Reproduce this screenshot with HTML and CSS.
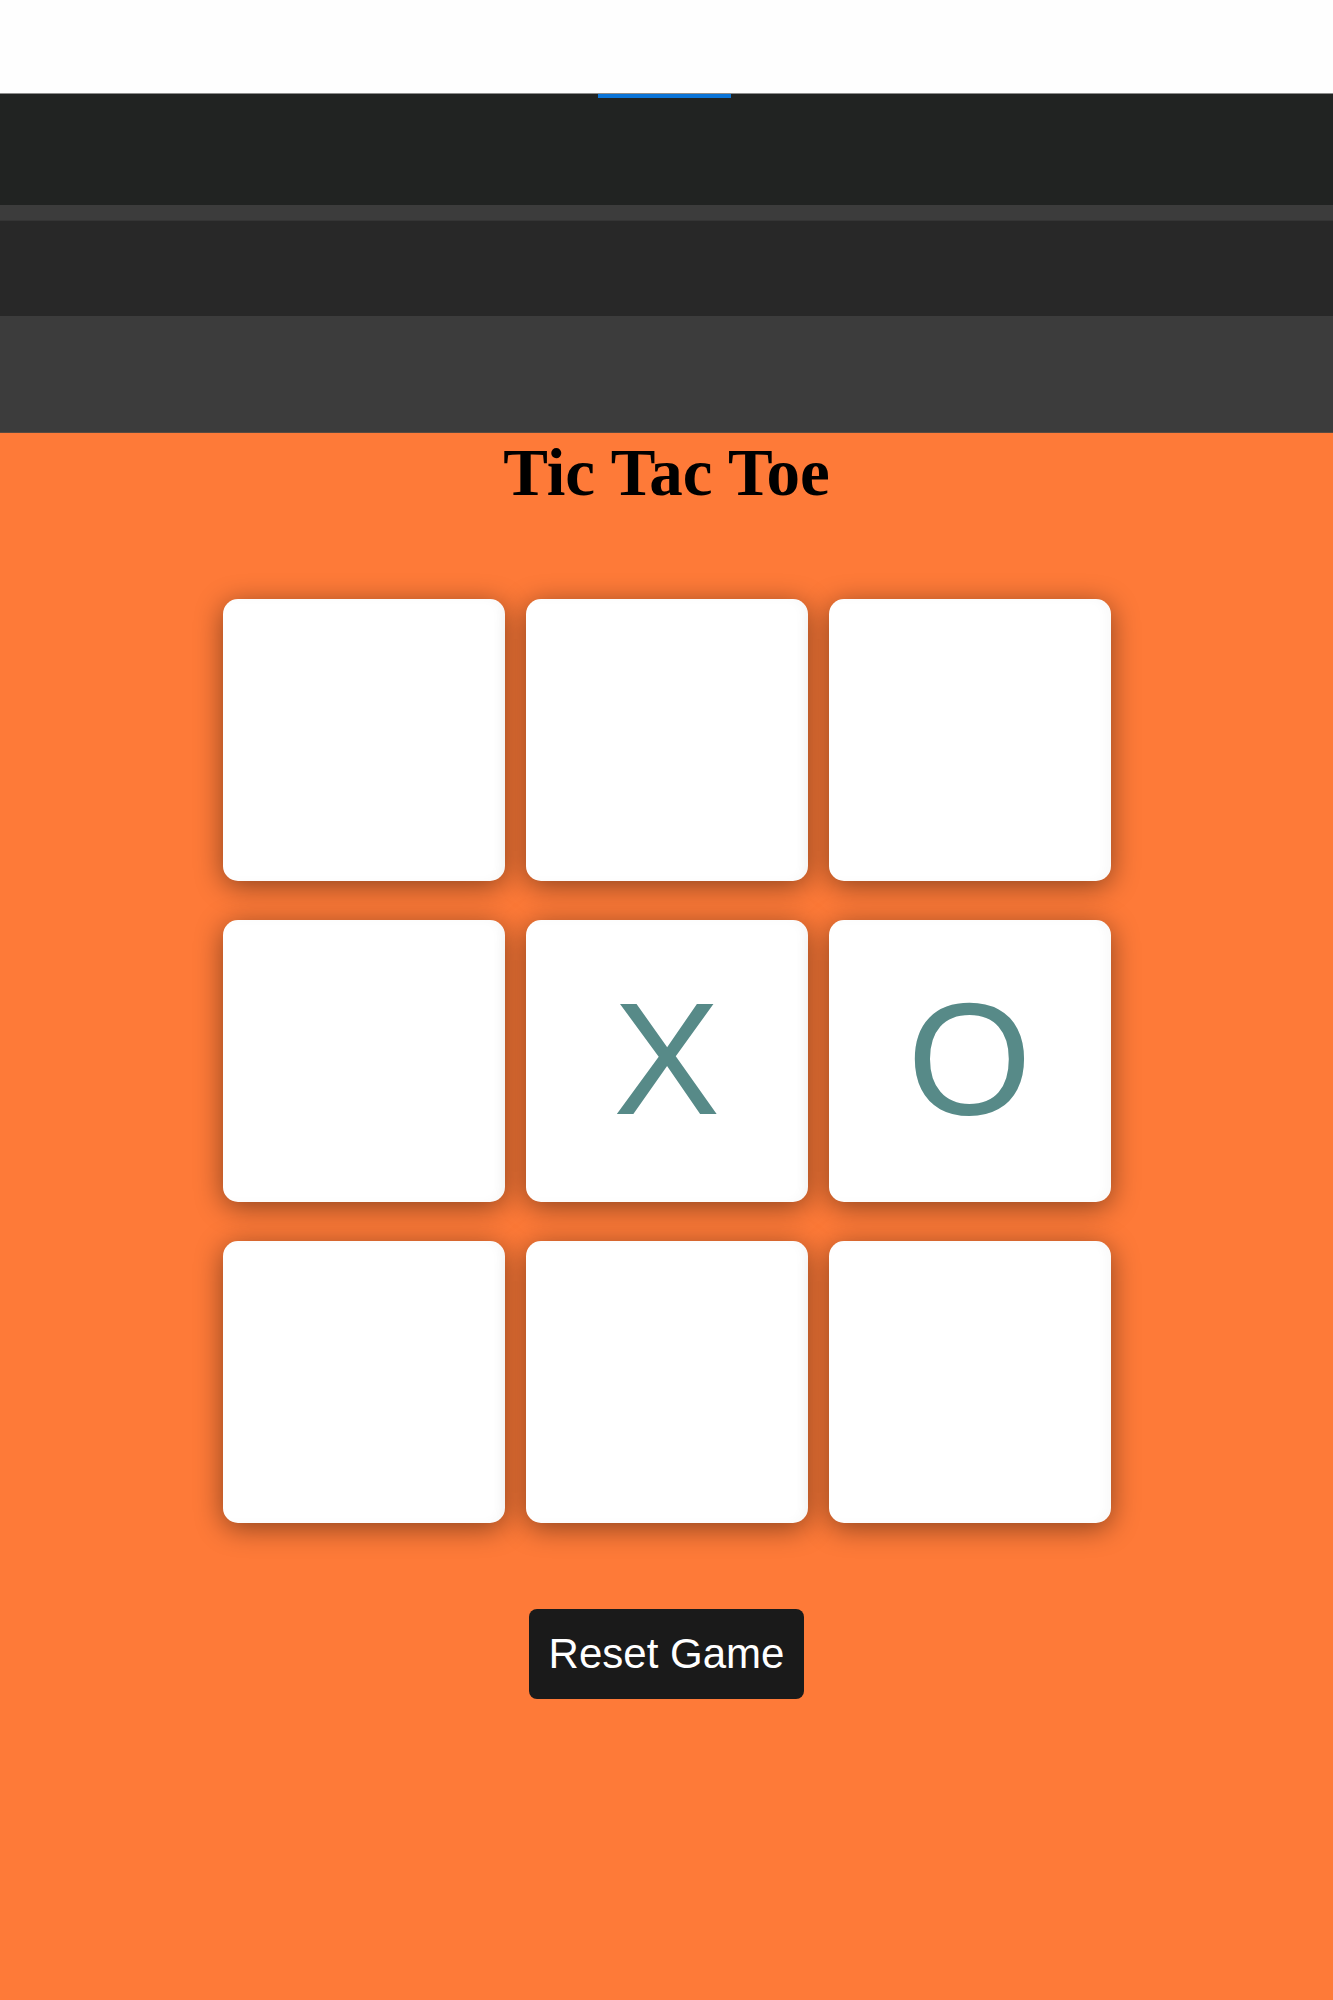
FILE: index.html
```html
<!DOCTYPE html>
<html lang="en">
<head>
<meta charset="utf-8">
<title>Tic Tac Toe</title>
<link rel="stylesheet" href="styles.css">
</head>
<body>
  <div class="chrome">
    <div class="chrome-white"></div>
    <div class="chrome-line"></div>
    <div class="chrome-dark"><span class="tab-indicator"></span></div>
    <div class="chrome-band"></div>
    <div class="chrome-mid"></div>
    <div class="chrome-gray"></div>
  </div>
  <main class="game">
    <h1 class="title">Tic Tac Toe</h1>
    <div class="board">
      <div class="cell"></div>
      <div class="cell"></div>
      <div class="cell"></div>
      <div class="cell"></div>
      <div class="cell">X</div>
      <div class="cell">O</div>
      <div class="cell"></div>
      <div class="cell"></div>
      <div class="cell"></div>
    </div>
    <button class="reset">Reset Game</button>
  </main>
</body>
</html>
```
FILE: styles.css
```css
* { box-sizing: border-box; }
html, body { margin: 0; padding: 0; }
body {
  background: #fe7a38;
  min-height: 2000px;
  font-family: "Liberation Serif", "Times New Roman", serif;
}
.chrome { display: flex; flex-direction: column; }
.chrome-white { height: 93px; background: #fefefe; }
.chrome-line { height: 1px; background: #8c8c8c; }
.chrome-dark { height: 111px; background: #212322; position: relative; }
.tab-indicator {
  position: absolute; left: 598px; top: 0; width: 133px; height: 4px;
  background: #0a74d8;
}
.chrome-band { height: 16px; background: #3c3c3c; border-bottom: 1px solid #353535; }
.chrome-mid { height: 95px; background: #282828; }
.chrome-gray { height: 117px; background: #3c3c3c; border-bottom: 1px solid #5a4a40; }
.game {
  display: flex; flex-direction: column; align-items: center;
}
.title {
  margin: 1px 0 0;
  font-size: 67px;
  font-weight: bold;
  color: #000;
  line-height: normal;
}
.board {
  margin-top: 88px;
  display: grid;
  grid-template-columns: repeat(3, 282px);
  grid-auto-rows: 282px;
  column-gap: 21px;
  row-gap: 39px;
}
.cell {
  background: #fff;
  border-radius: 15px;
  box-shadow: 0 5px 28px rgba(0, 0, 0, 0.45), inset -6px 0 10px rgba(0, 0, 0, 0.025);
  display: flex; align-items: center; justify-content: center;
  padding-bottom: 5px;
  font-family: "Liberation Sans", Arial, sans-serif;
  font-size: 160px;
  color: #578a88;
  line-height: 1;
}
.reset {
  margin-top: 86px;
  padding: 21px 20px;
  font-family: "Liberation Sans", Arial, sans-serif;
  font-size: 42px;
  line-height: normal;
  color: #fff;
  background: #1a1a1a;
  border: none;
  border-radius: 8px;
}
```
